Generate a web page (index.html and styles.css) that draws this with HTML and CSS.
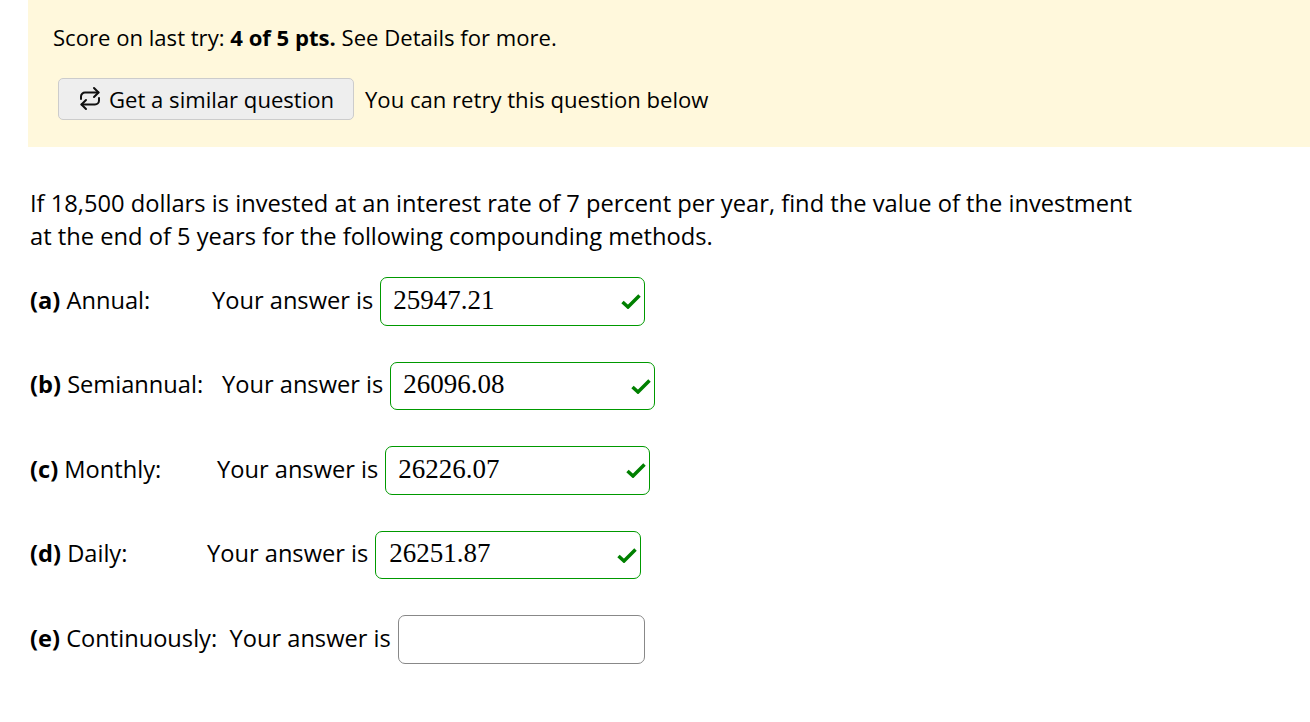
FILE: index.html
```html
<!DOCTYPE html>
<html lang="en">
<head>
<meta charset="utf-8">
<title>Question</title>
<link rel="stylesheet" href="styles.css">
</head>
<body>
<section class="banner">
  <p class="score">Score on last try: <b>4 of 5 pts.</b> See Details for more.</p>
  <div class="retry">
    <button class="similar" type="button">
      <svg class="loop" viewBox="0 0 22 25" width="22" height="25" fill="none" stroke="#111" stroke-width="2" stroke-linecap="round" stroke-linejoin="round">
        <path d="M15 2l4.5 4.5L15 11"/><path d="M2 13v-2.5a4 4 0 0 1 4-4h13.5"/><path d="M7 23l-4.5-4.5L7 14"/><path d="M20 12v2.500a4 4 0 0 1-4 4H2.500"/>
      </svg>
      <span>Get a similar question</span>
    </button>
    <span>You can retry this question below</span>
  </div>
</section>
<main class="question">
  <p class="prompt">If 18,500 dollars is invested at an interest rate of 7 percent per year, find the value of the investment at the end of 5 years for the following compounding methods.</p>
  <div class="answers">
    <div class="row"><span class="label w-a"><b>(a)</b> Annual:</span><span class="your">Your answer is</span><div class="box ok"><span class="value">25947.21</span><svg class="check" viewBox="0 0 20 16" width="20" height="16"><path d="M1.500 9L7 14 18.500 2.500" fill="none" stroke="#008000" stroke-width="3.500"/></svg></div></div>
    <div class="row"><span class="label w-b"><b>(b)</b> Semiannual:</span><span class="your">Your answer is</span><div class="box ok"><span class="value">26096.08</span><svg class="check" viewBox="0 0 20 16" width="20" height="16"><path d="M1.500 9L7 14 18.500 2.500" fill="none" stroke="#008000" stroke-width="3.500"/></svg></div></div>
    <div class="row"><span class="label w-c"><b>(c)</b> Monthly:</span><span class="your">Your answer is</span><div class="box ok"><span class="value">26226.07</span><svg class="check" viewBox="0 0 20 16" width="20" height="16"><path d="M1.500 9L7 14 18.500 2.500" fill="none" stroke="#008000" stroke-width="3.500"/></svg></div></div>
    <div class="row"><span class="label w-d"><b>(d)</b> Daily:</span><span class="your">Your answer is</span><div class="box ok box-wide"><span class="value">26251.87</span><svg class="check" viewBox="0 0 20 16" width="20" height="16"><path d="M1.500 9L7 14 18.500 2.500" fill="none" stroke="#008000" stroke-width="3.500"/></svg></div></div>
    <div class="row"><span class="label w-e"><b>(e)</b> Continuously:</span><span class="your your-e">Your answer is</span><div class="box empty"></div></div>
  </div>
</main>
</body>
</html>
```
FILE: styles.css
```css
html, body { margin: 0; padding: 0; background: #fff; }
body {
  font-family: "Open Sans", sans-serif;
  font-size: 23.65px;
  line-height: 33px;
  color: #000;
  height: 722px;
  overflow: hidden;
}
p { margin: 0; }
.banner {
  margin-left: 28px;
  height: 147px;
  background: #fff8dc;
  padding: 21px 0 0 25px;
  box-sizing: border-box;
  font-size: 22.1px;
}
.retry { display: flex; align-items: center; gap: 11px; margin: 24px 0 0 5px; }
.similar {
  display: flex; align-items: center; gap: 8px;
  width: 296px; height: 42px;
  padding: 0 0 0 20px;
  font: inherit;
  color: inherit;
  background: #eee;
  border: 1px solid #ccc;
  border-radius: 5px;
  box-sizing: border-box;
}
.loop { flex: none; margin-top: -2px; }
.question { padding: 40px 170px 0 30px; }
.prompt { width: 1110px; font-size: 23.7px; }
.answers { margin-top: 24.2px; display: flex; flex-direction: column; gap: 36px; }
.row { display: flex; align-items: center; height: 48.5px; }
.label { flex: none; padding-bottom: 2px; }
.w-a { width: 182px; }
.w-b { width: 192px; }
.w-c { width: 187px; }
.w-d { width: 177px; }
.w-e { width: 199.5px; }
.your { margin-right: 7px; padding-bottom: 2px; }
.your-e { margin-right: 7.500px; }
.box {
  width: 265px; height: 48.5px;
  border-radius: 7px;
  box-sizing: border-box;
  display: flex; align-items: center; justify-content: space-between;
  padding: 0 3px 0 12px;
}
.box-wide { width: 266px; padding-left: 13px; }
.ok { border: 1px solid #090; }
.empty { border: 1px solid #888; width: 247px; }
.value { font-family: "Liberation Serif", serif; font-size: 27px; padding-bottom: 2px; }
.check { flex: none; }
```
